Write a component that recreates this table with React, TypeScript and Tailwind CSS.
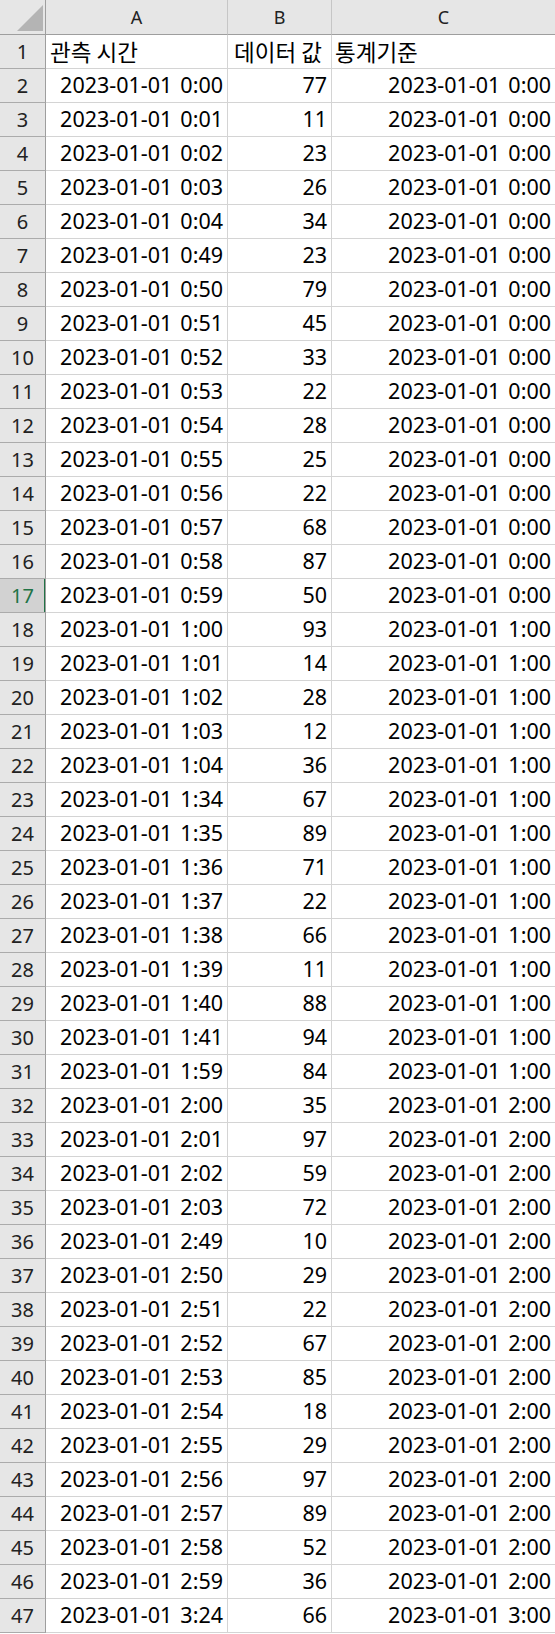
import React from "react";

const rows: [string, number, string][] = [
  ["0:00", 77, "0:00"],
  ["0:01", 11, "0:00"],
  ["0:02", 23, "0:00"],
  ["0:03", 26, "0:00"],
  ["0:04", 34, "0:00"],
  ["0:49", 23, "0:00"],
  ["0:50", 79, "0:00"],
  ["0:51", 45, "0:00"],
  ["0:52", 33, "0:00"],
  ["0:53", 22, "0:00"],
  ["0:54", 28, "0:00"],
  ["0:55", 25, "0:00"],
  ["0:56", 22, "0:00"],
  ["0:57", 68, "0:00"],
  ["0:58", 87, "0:00"],
  ["0:59", 50, "0:00"],
  ["1:00", 93, "1:00"],
  ["1:01", 14, "1:00"],
  ["1:02", 28, "1:00"],
  ["1:03", 12, "1:00"],
  ["1:04", 36, "1:00"],
  ["1:34", 67, "1:00"],
  ["1:35", 89, "1:00"],
  ["1:36", 71, "1:00"],
  ["1:37", 22, "1:00"],
  ["1:38", 66, "1:00"],
  ["1:39", 11, "1:00"],
  ["1:40", 88, "1:00"],
  ["1:41", 94, "1:00"],
  ["1:59", 84, "1:00"],
  ["2:00", 35, "2:00"],
  ["2:01", 97, "2:00"],
  ["2:02", 59, "2:00"],
  ["2:03", 72, "2:00"],
  ["2:49", 10, "2:00"],
  ["2:50", 29, "2:00"],
  ["2:51", 22, "2:00"],
  ["2:52", 67, "2:00"],
  ["2:53", 85, "2:00"],
  ["2:54", 18, "2:00"],
  ["2:55", 29, "2:00"],
  ["2:56", 97, "2:00"],
  ["2:57", 89, "2:00"],
  ["2:58", 52, "2:00"],
  ["2:59", 36, "2:00"],
  ["3:24", 66, "3:00"],
];

const font = { fontFamily: '"Noto Sans", "Noto Sans CJK KR", sans-serif' };
const kr = { fontFamily: '"Noto Sans CJK KR", "Noto Sans", sans-serif' };

function RowHeader({ n, selected }: { n: number; selected?: boolean }) {
  return (
    <div
      className={
        selected
          ? "h-[34px] flex items-center justify-center bg-[#d2d2d2] text-[#217346] text-[20px] border-b border-b-[#ababab] border-r border-r-[#9e9e9e] shadow-[inset_-1px_0_0_#217346]"
          : "h-[34px] flex items-center justify-center bg-[#e6e6e6] text-[#222] text-[20px] border-b border-b-[#ababab] border-r border-r-[#9e9e9e]"
      }
    >
      {n}
    </div>
  );
}

function DateText({ t }: { t: string }) {
  return (
    <>
      <span>2023-01-01</span>
      <span className="ml-[8px]">{t}</span>
    </>
  );
}

export default function App() {
  return (
    <div className="w-[555px] h-[1634px] overflow-hidden bg-white text-black" style={font}>
      <div className="grid grid-cols-[46px_182px_104px_1fr]">
        {/* header row */}
        <div className="h-[35px] bg-[#e6e6e6] border-b border-b-[#9e9e9e] border-r border-r-[#9e9e9e] flex items-end justify-end pr-[2px] pb-[3px]">
          <svg width="26" height="26" viewBox="0 0 26 26">
            <polygon points="26,0 26,26 0,26" fill="#b4b4b4" />
          </svg>
        </div>
        <div className="h-[35px] bg-[#e6e6e6] border-b border-b-[#9e9e9e] border-r border-r-[#c6c6c6] flex items-center justify-center text-[18px] text-[#222]">
          A
        </div>
        <div className="h-[35px] bg-[#e6e6e6] border-b border-b-[#9e9e9e] border-r border-r-[#c6c6c6] flex items-center justify-center text-[18px] text-[#222]">
          B
        </div>
        <div className="h-[35px] bg-[#e6e6e6] border-b border-b-[#9e9e9e] flex items-center justify-center text-[18px] text-[#222]">
          C
        </div>

        {/* row 1 */}
        <RowHeader n={1} />
        <div
          className="h-[34px] flex items-center pl-[4px] text-[22.5px] border-b border-r border-[#d4d4d4] whitespace-pre"
          style={kr}
        >
          관측 시간
        </div>
        <div
          className="h-[34px] flex items-center pl-[6px] text-[22.5px] border-b border-r border-[#d4d4d4] whitespace-pre"
          style={kr}
        >
          데이터 값
        </div>
        <div
          className="h-[34px] flex items-center pl-[3px] text-[22.5px] border-b border-[#d4d4d4] whitespace-nowrap"
          style={kr}
        >
          통계기준
        </div>

        {rows.map((r, i) => {
          const n = i + 2;
          return (
            <React.Fragment key={n}>
              <RowHeader n={n} selected={n === 17} />
              <div className="h-[34px] flex items-center justify-end pr-[4px] text-[21.5px] border-b border-r border-[#d4d4d4] whitespace-nowrap">
                <DateText t={r[0]} />
              </div>
              <div className="h-[34px] flex items-center justify-end pr-[4px] text-[21.5px] border-b border-r border-[#d4d4d4]">
                {r[1]}
              </div>
              <div className="h-[34px] flex items-center justify-end pr-[4px] text-[21.5px] border-b border-[#d4d4d4] whitespace-nowrap">
                <DateText t={r[2]} />
              </div>
            </React.Fragment>
          );
        })}
      </div>
    </div>
  );
}
